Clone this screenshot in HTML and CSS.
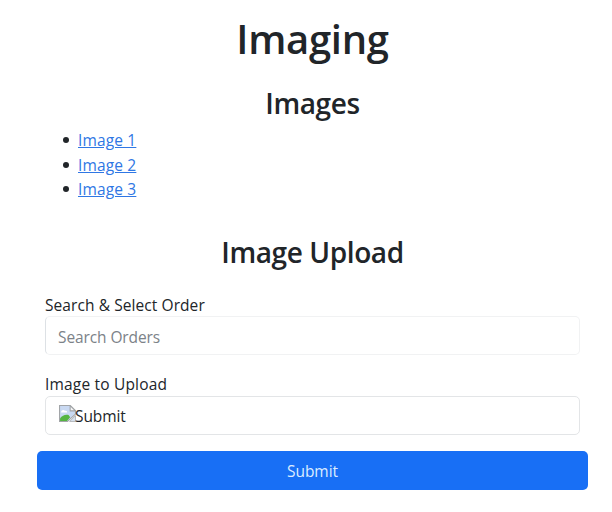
FILE: index.html
```html
<!DOCTYPE html>
<html lang="en">
<head>
<meta charset="utf-8">
<title>Imaging</title>
<link rel="stylesheet" href="styles.css">
</head>
<body>
<main class="page">
  <h1 class="title">Imaging</h1>
  <h2 class="heading images-heading">Images</h2>
  <ul class="images">
    <li><a href="#">Image 1</a></li>
    <li><a href="#">Image 2</a></li>
    <li><a href="#">Image 3</a></li>
  </ul>
  <h2 class="heading upload-heading">Image Upload</h2>
  <form class="form">
    <div class="field">
      <label class="label label-order" for="order">Search &amp; Select Order</label>
      <input class="control control-search" id="order" type="text" placeholder="Search Orders">
    </div>
    <div class="field">
      <div class="label label-upload">Image to Upload</div>
      <div class="control control-image">
        <svg class="broken" viewBox="0 0 16 16" aria-hidden="true">
          <path d="M.5.5h10l5 5v3L8 15.500H.5z" fill="#c9d9f2" stroke="#a2a5a8"/>
          <path d="M2 6.500c0-2 3-2.500 3.500-1C7 5 8 6 7.500 7H2z" fill="#fff"/>
          <path d="M1 15v-2.500c2-2.500 5-4 8-3l1.500 2L7.500 15z" fill="#55b542"/>
          <path d="M10.500.5v5h5z" fill="#f5f5f5" stroke="#a2a5a8"/>
          <path d="M15.500 10v5.500H10z" fill="#d8e3ef" stroke="#a2a5a8" stroke-width=".7"/>
        </svg><span class="alt">Submit</span>
      </div>
    </div>
    <button class="submit" type="button">Submit</button>
  </form>
</main>
</body>
</html>
```
FILE: styles.css
```css
* {
  box-sizing: border-box;
}

body {
  margin: 0;
  background: #fff;
  color: #212529;
  font: 15.5px/24.5px "Open Sans", sans-serif;
}

.page {
  width: 551px;
  margin-left: 37px;
  padding-top: 14px;
}

.title,
.heading {
  margin: 0;
  font-weight: 600;
  text-align: center;
}

.title {
  height: 49px;
  font-size: 40px;
  line-height: 49px;
  letter-spacing: -0.3px;
}

.heading {
  height: 35px;
  font-size: 28px;
  line-height: 35px;
  letter-spacing: -0.4px;
}

.images-heading {
  margin-top: 23px;
}

.images {
  margin: 7px 0 0;
  padding: 0 0 0 26px;
  letter-spacing: 0.15px;
  list-style: none;
}

.images li {
  display: flex;
  align-items: center;
}

.images li::before {
  content: "";
  width: 6px;
  height: 6px;
  margin-right: 9px;
  border-radius: 50%;
  background: #212529;
}

.images a {
  color: #2f77e4;
  text-decoration: underline;
}

.upload-heading {
  margin-top: 33px;
}

.form {
  margin-top: 23px;
}

.field {
  margin: 0 8px 17px;
}

.label {
  display: block;
  height: 23px;
  line-height: 24px;
}

.label-order {
  letter-spacing: 0.08px;
}

.label-upload {
  height: 24px;
  letter-spacing: 0.18px;
}

.control {
  display: flex;
  align-items: center;
  width: 535px;
  height: 39px;
  padding: 2px 12px 0;
  border: 1px solid #e3e5e7;
  border-radius: 5px;
  background: #fff;
  color: #212529;
  font: inherit;
  letter-spacing: -0.1px;
}

.control-search {
  padding-top: 3px;
  border-color: #f1f2f3;
  border-left-color: #dde1e5;
}

.control-search::placeholder {
  color: #7c8288;
  opacity: 1;
}

.control-image {
  padding-left: 13px;
}

.broken {
  width: 17px;
  height: 17px;
  margin: -6px -1px 0 0;
}

.submit {
  display: block;
  width: 551px;
  height: 39px;
  margin-top: -1px;
  padding: 2px 0 0;
  border: 0;
  border-radius: 5px;
  background: #186ff5;
  color: #dcecff;
  font: inherit;
  letter-spacing: -0.05px;
}
```
